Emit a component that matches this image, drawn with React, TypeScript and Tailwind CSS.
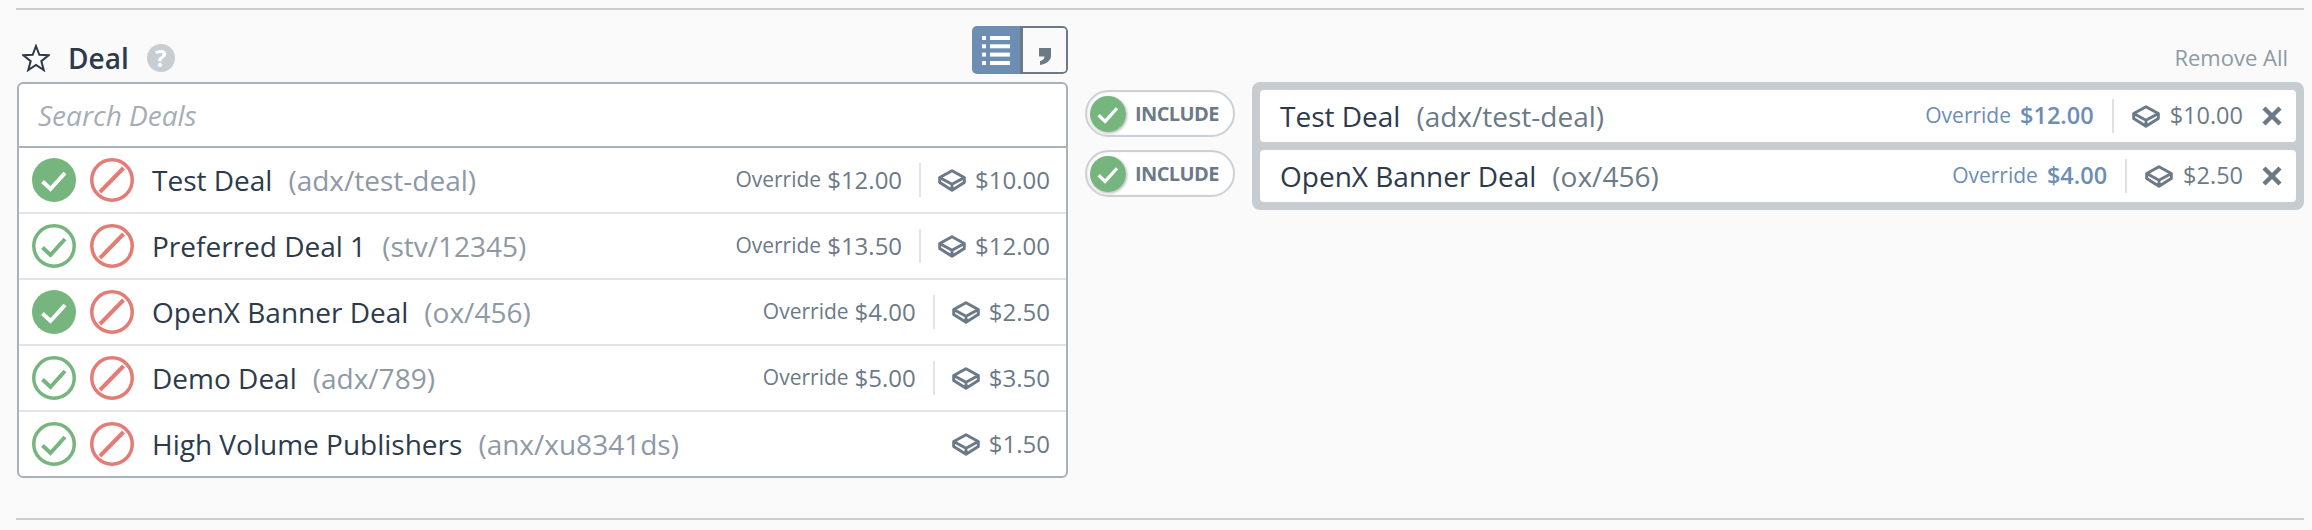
interface Deal {
  name: string;
  code: string;
  override?: string;
  price: string;
  included?: boolean;
}

const deals: Deal[] = [
  { name: "Test Deal", code: "(adx/test-deal)", override: "$12.00", price: "$10.00", included: true },
  { name: "Preferred Deal 1", code: "(stv/12345)", override: "$13.50", price: "$12.00" },
  { name: "OpenX Banner Deal", code: "(ox/456)", override: "$4.00", price: "$2.50", included: true },
  { name: "Demo Deal", code: "(adx/789)", override: "$5.00", price: "$3.50" },
  { name: "High Volume Publishers", code: "(anx/xu8341ds)", price: "$1.50" },
];

const selected = deals.filter((deal) => deal.included);

function CheckCircle({ filled, size = 44 }: { filled?: boolean; size?: number }) {
  return (
    <svg width={size} height={size} viewBox="0 0 44 44" className="shrink-0">
      <circle
        cx="22"
        cy="22"
        r={filled ? 22 : 20.25}
        fill={filled ? "#77b57e" : "none"}
        stroke={filled ? "none" : "#77b57e"}
        strokeWidth="3.5"
      />
      <path
        d="M10.5 23.5 L18.5 31 L33 15"
        fill="none"
        stroke={filled ? "#ffffff" : "#77b57e"}
        strokeWidth="4"
      />
    </svg>
  );
}

function BanCircle() {
  return (
    <svg width="44" height="44" viewBox="0 0 44 44" className="shrink-0">
      <circle cx="22" cy="22" r="20.25" fill="none" stroke="#e57b75" strokeWidth="3.5" />
      <path d="M10 34 L33.5 10" fill="none" stroke="#e57b75" strokeWidth="4" />
    </svg>
  );
}

function CubeIcon() {
  return (
    <svg width="28" height="23" viewBox="0 0 28 23" className="shrink-0">
      <path
        d="M14 1.7 L26.3 8.5 V13.5 L14 21.3 L1.7 13.5 V8.5 Z M1.7 8.5 L14 15.3 L26.3 8.5 M14 15.3 V21.3"
        fill="none"
        stroke="#6c7a87"
        strokeWidth="3"
        strokeLinejoin="round"
      />
    </svg>
  );
}

function StarIcon() {
  return (
    <svg width="28" height="28" viewBox="0 0 28 28" className="shrink-0">
      <path
        d="M14 2 L17.3 10.8 L26.6 11.3 L19.3 17.1 L21.8 26.1 L14 21 L6.2 26.1 L8.7 17.1 L1.4 11.3 L10.7 10.8 Z"
        fill="none"
        stroke="#2d3a4b"
        strokeWidth="2"
      />
    </svg>
  );
}

function ListIcon() {
  return (
    <svg width="28" height="29" viewBox="0 0 28 29" fill="#ffffff">
      <rect x="0" y="0" width="4" height="4" />
      <rect x="8" y="0" width="20" height="4" />
      <rect x="0" y="8.3" width="4" height="4" />
      <rect x="8" y="8.3" width="20" height="4" />
      <rect x="0" y="16.6" width="4" height="4" />
      <rect x="8" y="16.6" width="20" height="4" />
      <rect x="0" y="25" width="4" height="4" />
      <rect x="8" y="25" width="20" height="4" />
    </svg>
  );
}

function CommaIcon() {
  return (
    <svg width="12" height="17" viewBox="0 0 12 17" fill="#6c7a87" className="mt-[7px]">
      <path d="M0 0 H12 V8 C12 12 8 16 1 17 V13 C3.5 12.5 5.5 11 5.5 8.5 H0 Z" />
    </svg>
  );
}

function CloseIcon() {
  return (
    <svg width="20" height="20" viewBox="0 0 20 20" className="ml-[19px] shrink-0">
      <path d="M2 2 L18 18 M18 2 L2 18" fill="none" stroke="#6c7a87" strokeWidth="4.5" />
    </svg>
  );
}

function IncludePill() {
  return (
    <div className="flex h-[47px] w-[150px] items-center rounded-full border-2 border-[#ccd1d5] bg-white pl-[3px] shadow-[inset_1px_0_2px_rgba(0,0,0,0.08)]">
      <div className="rounded-full shadow-[1px_1px_3px_rgba(0,0,0,0.3)]">
        <CheckCircle filled size={36} />
      </div>
      <span className="ml-[9px] text-[20px] font-bold tracking-[-0.6px] text-[#6c7a87]">INCLUDE</span>
    </div>
  );
}

export default function App() {
  return (
    <div className="h-[530px] w-[2312px] bg-[#fafafa] pt-2 pl-4 font-['Open_Sans',sans-serif]">
      <div className="h-[512px] w-[2288px] border-y-2 border-[#c8cdd1] pl-px">
        <div className="flex items-start">
          <div className="w-[1051px]">
            <div className="flex h-[72px] items-start justify-between">
              <div className="mt-[32px] flex items-center pl-[5px]">
                <StarIcon />
                <span className="ml-[18px] text-[28px] leading-8 font-semibold text-[#2d3a4b]">Deal</span>
                <span className="ml-[18px] flex h-7 w-7 items-center justify-center rounded-full bg-[#c8cdd1] text-[24px] font-bold text-white">
                  ?
                </span>
              </div>
              <div className="mt-4 flex h-[48px] w-[96px] overflow-hidden rounded-[5px]">
                <div className="flex w-[48px] items-center justify-center bg-[#6d8db3]">
                  <ListIcon />
                </div>
                <div className="flex flex-1 justify-center rounded-r-[5px] border-2 border-l-[3px] border-[#6c7a87] pt-[13px]">
                  <CommaIcon />
                </div>
              </div>
            </div>
            <div className="overflow-hidden rounded-[6px] border-2 border-[#aab2b9] bg-white">
              <div className="flex h-[64px] items-center border-b-2 border-[#aab2b9] pl-[19px] text-[28px] text-[#a5adb5] italic">
                Search Deals
              </div>
              {deals.map((deal, index) => (
                <div
                  key={deal.name}
                  className={
                    index < deals.length - 1
                      ? "flex h-[66px] items-center border-b-2 border-[#e2e4e6] pr-[16px] pl-[13px]"
                      : "flex h-[64px] items-center pr-[16px] pl-[13px]"
                  }
                >
                  <CheckCircle filled={deal.included} />
                  <span className="ml-[14px]">
                    <BanCircle />
                  </span>
                  <span className="ml-[18px] text-[28px] whitespace-nowrap text-[#2d3a4b]">{deal.name}</span>
                  <span className="ml-[16px] text-[28px] whitespace-nowrap text-[#8d99a5]">{deal.code}</span>
                  <div className="ml-auto flex items-center text-[24px] whitespace-nowrap text-[#6c7a87]">
                    {deal.override && (
                      <>
                        <span className="text-[21px]">Override</span>
                        <span className="ml-[6px]">{deal.override}</span>
                        <span className="mx-[17px] h-[34px] w-[2px] bg-[#e2e4e6]" />
                      </>
                    )}
                    <CubeIcon />
                    <span className="ml-[9px]">{deal.price}</span>
                  </div>
                </div>
              ))}
            </div>
          </div>

          <div className="mt-[80px] ml-[17px] flex w-[150px] flex-col gap-[13px]">
            {selected.map((deal) => (
              <IncludePill key={deal.name} />
            ))}
          </div>

          <div className="ml-[17px] w-[1052px]">
            <div className="flex h-[72px] items-start justify-end pt-[33px] pr-[16px] text-[22px] leading-7 text-[#8d99a5]">
              Remove All
            </div>
            <div className="flex flex-col gap-2 rounded-[8px] bg-[#c7ccd1] p-2">
              {selected.map((deal) => (
                <div key={deal.name} className="flex h-[52px] items-center rounded-[4px] bg-white pr-[14px] pl-5 whitespace-nowrap">
                  <span className="text-[28px] text-[#2d3a4b]">{deal.name}</span>
                  <span className="ml-[16px] text-[28px] text-[#6c7a87]">{deal.code}</span>
                  <div className="ml-auto flex items-center text-[23.5px] text-[#6c7a87]">
                    <span className="text-[21px] text-[#6d8db3]">Override</span>
                    <span className="ml-[9px] font-semibold text-[#6d8db3]">{deal.override}</span>
                    <span className="mx-[18px] h-[34px] w-[2px] bg-[#dfe2e4]" />
                    <CubeIcon />
                    <span className="ml-[10px]">{deal.price}</span>
                    <CloseIcon />
                  </div>
                </div>
              ))}
            </div>
          </div>
        </div>
      </div>
    </div>
  );
}
